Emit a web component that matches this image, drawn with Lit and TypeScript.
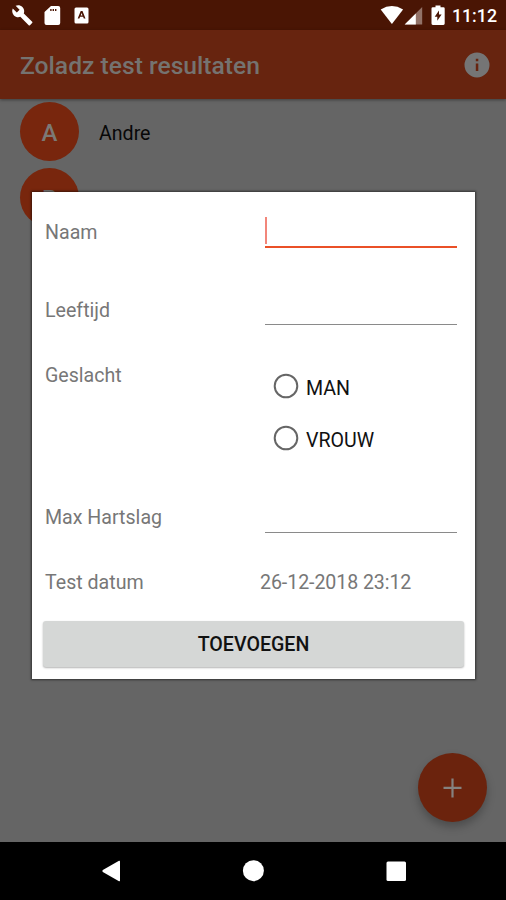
import { LitElement, html, css } from "lit";
import { customElement } from "lit/decorators.js";

@customElement("status-bar")
class StatusBar extends LitElement {
  static styles = css`
    :host { display: flex; justify-content: space-between; height: 30px; background: #4a1504; color: #fff; }
    svg { display: block; width: 506px; height: 30px; }
    .bar { display: grid; width: 100%; }
    .bar > * { grid-area: 1 / 1; }
    .time { justify-self: end; padding-right: 9px; font: 500 17.8px/32px Roboto, sans-serif; }
  `;
  render() {
    return html`<div class="bar">
      <svg viewBox="0 0 506 30">
        <g fill="#fff">
          <path transform="translate(11.3 4.3) scale(.92)" d="M22.700 19l-9.100-9.100c.9-2.300.4-5-1.500-6.900-2-2-5-2.400-7.400-1.300L9 6 6 9 1.600 4.700C.4 7.100.9 10.100 2.900 12.100c1.900 1.900 4.600 2.400 6.900 1.500l9.100 9.100c.4.400 1 .4 1.400 0l2.300-2.300c.5-.4.5-1.100.1-1.400z" />
          <path fill-rule="evenodd" d="M51 6h7.200a2 2 0 0 1 2 2v15a2 2 0 0 1-2 2H46.500a2 2 0 0 1-2-2V12zm-.8 3v2h1.400V9zm2.400 0v2h1.400V9zm2.400 0v2h1.400V9z" />
          <path fill-rule="evenodd" d="M76 7.500h11a1.500 1.500 0 0 1 1.500 1.500v13a1.500 1.500 0 0 1-1.500 1.500H76a1.500 1.500 0 0 1-1.500-1.500V9a1.500 1.500 0 0 1 1.500-1.500zM80.700 11l-3 7.500h1.700l.7-1.800h3l.7 1.800h1.700l-3-7.500zm.9 2 .9 2.400h-1.800z" />
          <path d="M380.700 9.400Q391.900 2.500 403.100 9.400L391.900 24z" />
          <path opacity=".4" d="M422.200 7v17.500h-17.500z" />
          <path d="M415.800 13.400v11.100h-11.100z" />
          <path fill-rule="evenodd" d="M435.500 5.600h5v1.700h2.900q1.300 0 1.300 1.300v15q0 1.300-1.300 1.300h-10.600q-1.300 0-1.300-1.300v-15q0-1.300 1.300-1.300h2.700zM439 10.500l-4.300 6.200h2.600v4l4.300-6.300H439z" />
        </g>
      </svg>
      <span class="time">11:12</span>
    </div>`;
  }
}

@customElement("test-dialog")
class TestDialog extends LitElement {
  static styles = css`
    :host { display: block; box-sizing: border-box; width: 443px; height: 487px; padding: 28px 11px 0; background: #fff; box-shadow: 0 0 2px 1px rgba(0,0,0,.5); font: 19.6px/24px Roboto, sans-serif; color: #777; }
    .row { display: grid; grid-template-columns: 215px 1fr; padding-left: 2px; }
    .text { padding-top: 1px; }
    .stamp { letter-spacing: -.08px; }
    .name { height: 78px; }
    .age, .rate { height: 65px; }
    .sex { height: 142px; }
    .date { height: 51px; }
    .field { width: 192px; height: 27px; margin-left: 5px; box-sizing: border-box; border-bottom: 1px solid #8a8a8a; }
    .rate .field { height: 28px; }
    .active { height: 31px; margin-top: -3px; border-bottom: 2px solid #ea5027; }
    .caret { width: 2px; height: 27px; background: #f2867a; }
    .options { display: flex; flex-direction: column; gap: 26px; padding: 10px 0 0 13px; color: #111; }
    .option { display: flex; align-items: center; gap: 7px; height: 26px; }
    .option span { padding-top: 5px; line-height: 23px; }
    .radio { width: 26px; height: 26px; }
    .button { display: block; width: 421px; height: 46px; border: 0; padding: 0; border-radius: 3px; background: #d5d7d6; box-shadow: 0 1px 2px rgba(0,0,0,.3); font: 500 19.6px/46px Roboto, sans-serif; color: #111; }
    .button { padding-top: 1px; line-height: 45px; }
  `;
  radio(label: string) {
    return html`<div class="option">
      <svg class="radio" viewBox="0 0 26 26"><circle cx="13" cy="13" r="11.300" fill="none" stroke="#666" stroke-width="2" /></svg>
      <span>${label}</span>
    </div>`;
  }
  render() {
    return html`
      <div class="row name"><span class="text">Naam</span><div class="field active"><div class="caret"></div></div></div>
      <div class="row age"><span class="text">Leeftijd</span><div class="field"></div></div>
      <div class="row sex"><span class="text">Geslacht</span><div class="options">${this.radio("MAN")}${this.radio("VROUW")}</div></div>
      <div class="row rate"><span class="text">Max Hartslag</span><div class="field"></div></div>
      <div class="row date"><span class="text">Test datum</span><span class="text stamp">26-12-2018 23:12</span></div>
      <button class="button">TOEVOEGEN</button>
    `;
  }
}

@customElement("app-root")
class AppRoot extends LitElement {
  static styles = css`
    :host { display: flex; flex-direction: column; position: relative; width: 506px; height: 900px; overflow: hidden; background: #656565; font-family: Roboto, sans-serif; }
    .header { display: flex; align-items: center; justify-content: space-between; box-sizing: border-box; height: 69px; padding: 1px 15px 0 20px; background: #67240f; box-shadow: 0 1px 3px rgba(0,0,0,.4); color: #757370; }
    .title { font-size: 24.65px; font-weight: 500; }
    .info { width: 28px; height: 28px; }
    .list { flex: 1; display: flex; flex-direction: column; gap: 7px; padding: 3.4px 0 0 20px; }
    .person { display: flex; align-items: center; gap: 20px; height: 59px; font-size: 19.6px; color: #080808; }
    .person span { padding-top: 3px; }
    .avatar { width: 59px; height: 59px; border-radius: 50%; background: #78260d; color: #7c7976; font-size: 24px; font-weight: 500; line-height: 62px; text-align: center; }
    .nav { display: flex; align-items: center; height: 58px; background: #000; }
    .nav svg { width: 506px; height: 58px; }
    .fab { position: absolute; left: 418px; top: 753px; width: 69px; height: 69px; border-radius: 50%; background: #6b230d; box-shadow: 0 5px 8px rgba(0,0,0,.25); }
    .dialog { position: absolute; left: 32px; top: 192px; }
  `;
  render() {
    return html`
      <status-bar></status-bar>
      <div class="header">
        <span class="title">Zoladz test resultaten</span>
        <svg class="info" viewBox="0 0 28 28"><path fill="#757575" fill-rule="evenodd" d="M14 1.500a12.500 12.500 0 1 0 0 25a12.500 12.500 0 1 0 0-25zM12.800 7.800h2.500v2.500h-2.500zM12.800 12.600h2.500v7.500h-2.500z" /></svg>
      </div>
      <div class="list">
        ${[["A", "Andre"], ["B", ""]].map(([initial, name]) => html`<div class="person"><div class="avatar">${initial}</div><span>${name}</span></div>`)}
      </div>
      <div class="nav">
        <svg viewBox="0 0 506 58"><g fill="#fff"><path d="M102.800 28 119 18.800q1-.5 1 .6v19.200q0 1.100-1 .6L102.800 30q-1-1 0-2z" /><circle cx="253.400" cy="28.700" r="10.500" /><rect x="386.500" y="19.500" width="19.500" height="19.500" rx="1.500" /></g></svg>
      </div>
      <svg class="fab" viewBox="0 0 69 69"><path d="M34.500 25.500v19M25.500 34.800h18" fill="none" stroke="#858280" stroke-width="2.200" /></svg>
      <test-dialog class="dialog"></test-dialog>
    `;
  }
}
